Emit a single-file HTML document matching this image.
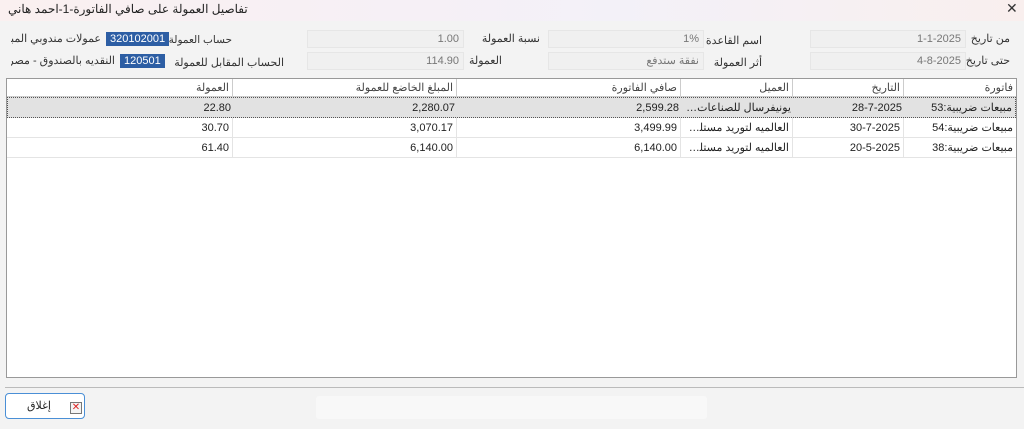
<!DOCTYPE html>
<html><head><meta charset="utf-8"><style>
*{margin:0;padding:0;box-sizing:border-box}
body{width:1024px;height:429px;background:#f3f3f3;font-family:"Liberation Sans","Noto Sans CJK SC",sans-serif;font-size:11px;color:#222;position:relative;overflow:hidden}
.a{position:absolute;white-space:nowrap}
.title{left:0;top:0;width:1024px;height:21px;background:linear-gradient(90deg,#faf0f0,#f6f0f6 40%,#f3f1f8 60%,#f9efee);}
.fld{position:absolute;background:#f0f0f0;border:1px solid #e6e6e6;height:18px;color:#777;text-align:right;padding-right:4px;line-height:16px;white-space:nowrap}
.lbl{position:absolute;direction:rtl;color:#333;font-size:11px;white-space:nowrap}
.badge{position:absolute;background:#2d5ea4;color:#fff;height:14px;line-height:14px;padding:0 4px;font-size:11px}
.grid{position:absolute;left:6px;top:78px;width:1011px;height:300px;background:#fff;border:1px solid #999}
.row{position:absolute;left:0;width:1009px;height:20px;border-bottom:1px solid #e4e4e4}
.c{position:absolute;top:0;height:20px;line-height:20px;text-align:right;padding-right:3px;padding-left:4px;direction:rtl;overflow:hidden;white-space:nowrap;text-overflow:ellipsis}
.hd .c{border-right:1px solid #ccc;color:#444}
</style></head><body>
<div class="a title"></div>
<div class="a" style="left:8px;top:2px;font-size:12px;direction:rtl">تفاصيل العمولة على صافي الفاتورة-1-احمد هاني</div>
<div class="a" style="left:1006px;top:0px;font-size:14px;color:#333">✕</div>

<div class="fld" style="left:810px;top:30px;width:156px">1-1-2025</div>
<div class="lbl" style="right:14px;top:32px">من تاريخ</div>
<div class="fld" style="left:810px;top:52px;width:156px">4-8-2025</div>
<div class="lbl" style="right:14px;top:54px">حتى تاريخ</div>

<div class="fld" style="left:548px;top:30px;width:156px">1%</div>
<div class="lbl" style="right:262px;top:34px">اسم القاعدة</div>
<div class="fld" style="left:548px;top:52px;width:156px">نفقة ستدفع</div>
<div class="lbl" style="right:262px;top:56px">أثر العمولة</div>

<div class="fld" style="left:307px;top:30px;width:157px">1.00</div>
<div class="lbl" style="right:484px;top:32px">نسبة العمولة</div>
<div class="fld" style="left:307px;top:52px;width:157px">114.90</div>
<div class="lbl" style="right:522px;top:54px">العمولة</div>

<div class="lbl" style="right:792px;top:34px;font-size:10.5px">حساب العمولة</div>
<div class="lbl" style="right:740px;top:56px">الحساب المقابل للعمولة</div>
<div class="badge" style="left:106px;top:32px">320102001</div>
<div class="badge" style="left:120px;top:54px">120501</div>
<div class="lbl" style="left:11px;top:32px;width:90px;overflow:hidden;text-align:right">عمولات مندوبي المبيعات</div>
<div class="lbl" style="left:11px;top:54px;width:104px;overflow:hidden;text-align:right">النقديه بالصندوق - مصري</div>

<div class="grid">
 <div class="row hd" style="top:0;height:18px;border-bottom:1px solid #ccc">
  <div class="c" style="left:0;width:226px;height:18px;line-height:18px">العمولة</div>
  <div class="c" style="left:226px;width:224px;height:18px;line-height:18px">المبلغ الخاضع للعمولة</div>
  <div class="c" style="left:450px;width:224px;height:18px;line-height:18px">صافي الفاتورة</div>
  <div class="c" style="left:674px;width:112px;height:18px;line-height:18px">العميل</div>
  <div class="c" style="left:786px;width:111px;height:18px;line-height:18px">التاريخ</div>
  <div class="c" style="left:897px;width:112px;height:18px;line-height:18px;border-right:none">فاتورة</div>
 </div>
 <div class="row" style="top:18px;height:21px;background:#e2e2e2;border:1px dotted #555">
  <div class="c" style="left:0;width:226px">22.80</div>
  <div class="c" style="left:226px;width:224px">2,280.07</div>
  <div class="c" style="left:450px;width:224px">2,599.28</div>
  <div class="c" style="left:674px;width:112px">يونيفرسال للصناعات المتحدة</div>
  <div class="c" style="left:786px;width:111px">28-7-2025</div>
  <div class="c" style="left:897px;width:110px">مبيعات ضريبية:53</div>
 </div>
 <div class="row" style="top:39px">
  <div class="c" style="left:0;width:226px;border-right:1px solid #e4e4e4">30.70</div>
  <div class="c" style="left:226px;width:224px;border-right:1px solid #e4e4e4">3,070.17</div>
  <div class="c" style="left:450px;width:224px;border-right:1px solid #e4e4e4">3,499.99</div>
  <div class="c" style="left:674px;width:112px;border-right:1px solid #e4e4e4">العالميه لتوريد مستلزمات</div>
  <div class="c" style="left:786px;width:111px;border-right:1px solid #e4e4e4">30-7-2025</div>
  <div class="c" style="left:897px;width:112px">مبيعات ضريبية:54</div>
 </div>
 <div class="row" style="top:59px">
  <div class="c" style="left:0;width:226px;border-right:1px solid #e4e4e4">61.40</div>
  <div class="c" style="left:226px;width:224px;border-right:1px solid #e4e4e4">6,140.00</div>
  <div class="c" style="left:450px;width:224px;border-right:1px solid #e4e4e4">6,140.00</div>
  <div class="c" style="left:674px;width:112px;border-right:1px solid #e4e4e4">العالميه لتوريد مستلزمات</div>
  <div class="c" style="left:786px;width:111px;border-right:1px solid #e4e4e4">20-5-2025</div>
  <div class="c" style="left:897px;width:112px">مبيعات ضريبية:38</div>
 </div>
</div>

<div class="a" style="left:5px;top:387px;width:1019px;height:1px;background:#bbb"></div>
<div class="a" style="left:316px;top:396px;width:391px;height:23px;background:#f8f8f8;border-radius:3px"></div>
<div class="a" style="left:5px;top:393px;width:80px;height:26px;background:#fff;border:1px solid #4a8fd6;border-radius:4px"></div>
<div class="a" style="left:70px;top:402px;width:12px;height:12px;border:1px solid #777;background:#f4f4f4;color:#d22;font-size:10px;line-height:10px;text-align:center">✕</div>
<div class="a" style="left:27px;top:399px;font-size:11px;direction:rtl">إغلاق</div>
</body></html>
